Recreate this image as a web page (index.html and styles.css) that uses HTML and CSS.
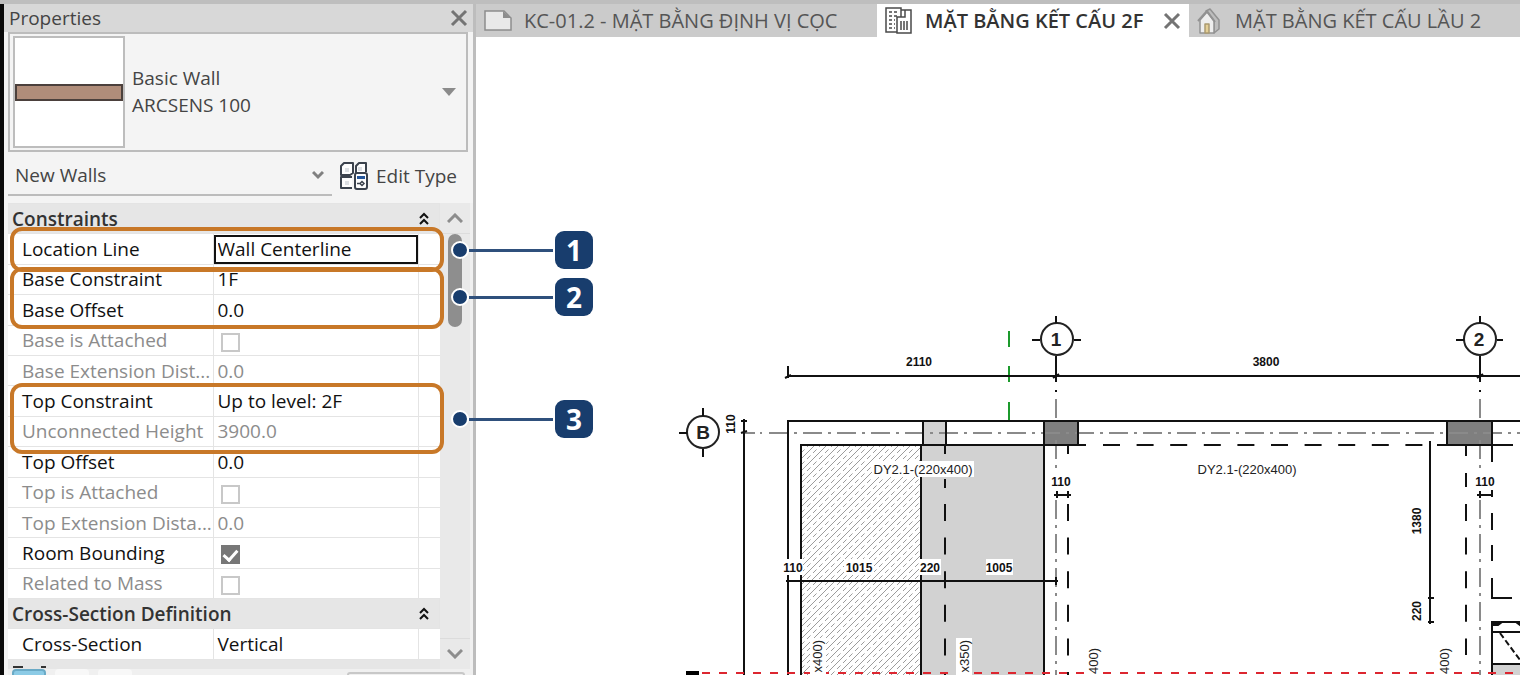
FILE: index.html
```html
<!DOCTYPE html>
<html lang="vi">
<head>
<meta charset="utf-8">
<title>Properties</title>
<link rel="stylesheet" href="styles.css">
</head>
<body>
<div class="app">
  <aside class="panel">
    <header class="panel-title">
      <h1>Properties</h1>
      <button class="close" aria-label="Close properties"><svg width="18" height="18" viewBox="0 0 18 18"><path d="M2 2L16 16M16 2L2 16"/></svg></button>
    </header>
    <button class="type-selector">
      <span class="type-preview"><span class="wall-swatch"></span></span>
      <span class="type-name"><span>Basic Wall</span><span>ARCSENS 100</span></span>
      <svg class="triangle" width="14" height="8" viewBox="0 0 14 8"><path d="M0 0H14L7 8Z"/></svg>
    </button>
    <div class="filter">
      <div class="select-wrap">
        <select aria-label="Element filter"><option>New Walls</option></select>
        <svg class="caret" width="12" height="10" viewBox="0 0 12 10"><path d="M1 2L6 7L11 2"/></svg>
      </div>
      <button class="edit-type">
        <svg width="28" height="28" viewBox="0 0 28 28">
          <g fill="#fdfdfd" stroke="#3b424d" stroke-width="2" stroke-linejoin="round"><path d="M4 1H13V11L10 13H1V4Z"/><path d="M16 12V4L19 1H26V10"/><path d="M12 26H1V15H12"/><rect x="15" y="11" width="12" height="16" rx="2"/></g>
          <path fill="#dcdfe3" d="M5 6H9V10H5ZM18 5H22V9H18ZM5 19H9V23H5Z"/>
          <path fill="#24559a" d="M17 14H25V17H17Z"/>
          <path fill="none" stroke="#3b424d" stroke-width="1.500" d="M17 21.500H20M20 21.500L22 19.500L24 21.500L22 23.500Z"/>
        </svg>
        <span>Edit Type</span>
      </button>
    </div>
    <div class="grid">
      <div class="rows">
        <table>
          <colgroup><col class="c-name"><col><col class="c-more"></colgroup>
          <tbody>
            <tr class="group"><th colspan="3"><div>Constraints <button aria-label="Collapse Constraints"><svg width="10" height="14" viewBox="0 0 10 14"><path d="M1 6L5 2L9 6M1 12L5 8L9 12"/></svg></button></div></th></tr>
            <tr><th><label for="loc">Location Line</label></th><td class="editing"><input id="loc" type="text" value="Wall Centerline"></td><td></td></tr>
            <tr><th>Base Constraint</th><td>1F</td><td></td></tr>
            <tr><th>Base Offset</th><td>0.0</td><td></td></tr>
            <tr class="off"><th><label for="ba">Base is Attached</label></th><td><input id="ba" type="checkbox" disabled></td><td></td></tr>
            <tr class="off"><th>Base Extension Dist...</th><td>0.0</td><td></td></tr>
            <tr><th>Top Constraint</th><td>Up to level: 2F</td><td></td></tr>
            <tr class="off"><th>Unconnected Height</th><td>3900.0</td><td></td></tr>
            <tr><th>Top Offset</th><td>0.0</td><td></td></tr>
            <tr class="off"><th><label for="ta">Top is Attached</label></th><td><input id="ta" type="checkbox" disabled></td><td></td></tr>
            <tr class="off"><th>Top Extension Dista...</th><td>0.0</td><td></td></tr>
            <tr><th><label for="rb">Room Bounding</label></th><td><input id="rb" type="checkbox" checked></td><td></td></tr>
            <tr class="off"><th><label for="rm">Related to Mass</label></th><td><input id="rm" type="checkbox" disabled></td><td></td></tr>
            <tr class="group"><th colspan="3"><div>Cross-Section Definition <button aria-label="Collapse Cross-Section Definition"><svg width="10" height="14" viewBox="0 0 10 14"><path d="M1 6L5 2L9 6M1 12L5 8L9 12"/></svg></button></div></th></tr>
            <tr><th>Cross-Section</th><td>Vertical</td><td></td></tr>
          </tbody>
        </table>
        <svg class="next-group" width="40" height="9" viewBox="0 0 40 9"><path d="M5 7H15M33 7H38"/></svg>
      </div>
      <div class="scrollbar">
        <button aria-label="Scroll up"><svg width="16" height="10" viewBox="0 0 16 10"><path d="M1 9L8 2L15 9"/></svg></button>
        <div class="track"><div class="thumb"></div></div>
        <button aria-label="Scroll down"><svg width="16" height="10" viewBox="0 0 16 10"><path d="M1 1L8 8L15 1"/></svg></button>
      </div>
      <div class="mark mark-1"></div>
      <div class="mark mark-2"></div>
      <div class="mark mark-3"></div>
      <div class="callout callout-1"><i class="dot"></i><i class="lead"></i><b>1</b></div>
      <div class="callout callout-2"><i class="dot"></i><i class="lead"></i><b>2</b></div>
      <div class="callout callout-3"><i class="dot"></i><i class="lead"></i><b>3</b></div>
    </div>
    <footer class="panel-foot"><span class="tile blue"></span><span class="tile"></span><span class="tile"></span><span class="apply"></span></footer>
  </aside>

  <main class="view">
    <nav class="tabs">
      <button class="tab tab-sheet">
        <svg width="28" height="22" viewBox="0 0 28 22"><path fill="#e9e9e9" stroke="#8d8d8d" stroke-width="1.500" d="M1 1H20L27 8V20H1Z"/><path fill="#8d8d8d" d="M19 1L27 8H19Z"/></svg>
        <span>KC-01.2 - MẶT BẰNG ĐỊNH VỊ CỌC</span>
      </button>
      <div class="tab active">
        <svg width="28" height="28" viewBox="0 0 28 28" fill="none" stroke="#4a4a4a" stroke-width="1.500"><path d="M12 25H1V1H16V10M16 3H26V26H12V10H20V3"/><path stroke-dasharray="3 2" d="M4 5H13M4 9H13M4 13H10M4 17H10M4 21H10"/><path d="M16 14V23M19 14V23M22 14V23"/></svg>
        <span>MẶT BẰNG KẾT CẤU 2F</span>
        <button class="close" aria-label="Close view"><svg width="18" height="18" viewBox="0 0 18 18"><path d="M2 2L16 16M16 2L2 16"/></svg></button>
      </div>
      <button class="tab tab-plan">
        <svg width="26" height="26" viewBox="0 0 26 26" stroke="#929292" stroke-width="1.500" stroke-linejoin="round"><path fill="#bdbdbd" d="M9 3L13 1L22 12V21L17 25V13Z"/><path fill="#eee" d="M3 12L10 4L17 13V25H3Z"/><path fill="none" stroke-width="2" d="M1 13L10 3L18 14"/><path fill="#e4cf96" stroke="#aa9a70" d="M8 16H12V25H8Z"/></svg>
        <span>MẶT BẰNG KẾT CẤU LẦU 2</span>
      </button>
    </nav>
    <svg class="drawing" viewBox="476 37 1044 638" preserveAspectRatio="xMinYMin slice" role="img" aria-label="Structural plan">
      <defs>
        <pattern id="hatch" width="12" height="12" patternUnits="userSpaceOnUse">
          <path class="hatch" d="M-3 3L3 -3M-3 15L15 -3M9 15L15 9"/>
          <path class="hatch" stroke-dasharray="5 3.500" d="M-3 9L9 -3M3 15L15 3"/>
        </pattern>
      </defs>
      <rect x="802" y="445" width="119" height="230" fill="url(#hatch)"/>
      <rect x="922" y="445" width="122" height="230" fill="#d2d2d2"/>
      <rect x="923" y="422" width="23" height="22" fill="#d2d2d2"/>
      <rect x="1045" y="422" width="33" height="23" fill="#7f7f7f"/>
      <rect x="1447" y="422" width="45" height="23" fill="#7f7f7f"/>
      <rect x="1493" y="665" width="27" height="10" fill="#d2d2d2"/>
      <g class="axis">
        <path class="solid" d="M745 433H755M760 433H762M1056 399V418M1480 399V418"/>
        <path d="M769 433H1520M1056 500V675M1480 500V675"/>
        <path d="M1056 440V474M1480 440V474"/>
      </g>
      <path class="green" d="M1009 331V347M1009 366V382M1009 402V420"/>
      <g class="ink">
        <path d="M788 376H1520M788 366V378M785 378L791 375M1053 378L1059 374M1477 378L1483 374"/>
        <path d="M1056 364V382M1056 390V392M1480 364V382M1480 390V392"/>
        <path d="M788 675V421H1520M801 675V445H1086M921 445V675M1044 421V675M1078 421V445M923 421V445M946 421V445"/>
        <path d="M1437 445H1513M1447 421V445M1492 421V462"/>
        <path stroke-dasharray="17 16.600" d="M1103 445H1434M945 504V675M1068 504V675M1466 504V655"/>
        <path d="M945 445V454M945 479V488M1068 445V454M1466 445V456M1466 473V487M1492 490V497M1492 513V530M1492 545V561M1492 578V598H1512"/>
        <path d="M744 419V675M741 421H747M741 433L747 431"/>
        <path d="M786 581H1058M788 577V585M1056 577V585"/>
        <path d="M1054 495H1071M1057 491V498M1068 491V498M1477 495H1493M1480 491V498"/>
        <path d="M1430 441V624M1428 598H1434M1428 622H1434"/>
        <path d="M1492 675V622H1520M1492 632H1520M1492 664H1520"/>
        <path stroke-dasharray="6 3" d="M1500 633L1520 660"/>
        <path fill="#111" d="M1493 622H1502L1498 625H1493ZM1516 622H1520V625Z"/>
        <g class="bubble"><circle cx="1057" cy="339" r="16"/><circle cx="1480" cy="339" r="16"/><circle cx="703" cy="432" r="16"/></g>
        <path d="M1056 316V323M1056 356V364M1480 356V364M1032 340H1040M1074 340H1081M1480 316V323M1456 340H1464M1497 340H1503M703 408V416M703 449V457M679 433H687"/>
      </g>
      <path class="red" d="M702 673H1085M1103 673H1434M1454 673H1520"/>
      <rect x="686" y="671" width="13" height="4" fill="#000"/>
      <g class="label-bg">
        <rect x="872" y="461" width="102" height="16"/><rect x="784" y="559" width="19" height="16"/><rect x="844" y="559" width="30" height="16"/><rect x="919" y="559" width="22" height="16"/><rect x="986" y="559" width="27" height="16"/><rect x="810" y="638" width="16" height="37"/><rect x="956" y="638" width="16" height="37"/><rect x="722" y="413" width="16" height="22"/>
      </g>
      <g class="bubble-text"><text x="1056" y="346">1</text><text x="1479" y="346">2</text><text x="703" y="439">B</text></g>
      <g class="dim">
        <text x="919" y="366">2110</text><text x="1266" y="366">3800</text><text x="793" y="572">110</text><text x="859" y="572">1015</text><text x="930" y="572">220</text><text x="999" y="572">1005</text><text x="1061" y="486">110</text><text x="1485" y="486">110</text>
        <text transform="translate(735 424) rotate(-90)">110</text><text transform="translate(1421 521) rotate(-90)">1380</text><text transform="translate(1421 611) rotate(-90)">220</text>
      </g>
      <g class="beam">
        <text x="923" y="474">DY2.1-(220x400)</text><text x="1247" y="474">DY2.1-(220x400)</text>
      </g>
      <g class="beam beam-side">
        <text transform="translate(822 640) rotate(-90)">x400)</text><text transform="translate(969 640) rotate(-90)">x350)</text><text transform="translate(1098 648) rotate(-90)">400)</text><text transform="translate(1449 648) rotate(-90)">400)</text>
      </g>
    </svg>
  </main>
</div>
</body>
</html>
```
FILE: styles.css
```css
* { box-sizing: border-box; }
body {
  margin: 0;
  font-family: "Open Sans", "Noto Sans", sans-serif;
  font-size: 19px;
  line-height: 26px;
  color: #444;
  background: #fff;
}
button, select, input { font: inherit; color: inherit; margin: 0; padding: 0; border: 0; border-radius: 0; background: none; }
button { display: flex; align-items: center; }
svg { flex: none; }

.app { display: flex; height: 100vh; overflow: hidden; border-top: 4px solid #bebebe; }

.panel {
  position: relative;
  z-index: 1;
  display: flex;
  flex-direction: column;
  flex: 0 0 476px;
  border-left: 4px solid #0a0a0a;
  border-right: 3px solid #bdbdbd;
  padding-left: 4px;
  background: #f4f4f4;
}
.panel-title { display: flex; align-items: center; justify-content: space-between; height: 28px; margin-left: -4px; padding: 0 5px; background: #d8d8d8; flex: none; }
.panel-title h1 { margin: 0; font-size: 19px; font-weight: 400; }
.close path { fill: none; stroke: #747474; stroke-width: 3; }

.type-selector { flex: none; height: 120px; margin-right: 5px; padding: 2px 3px; border: 2px solid #bcbcbc; text-align: left; gap: 7px; }
.type-preview { display: flex; align-items: center; width: 112px; height: 112px; border: 2px solid #bdbdbd; background: #fff; }
.wall-swatch { flex: 1; height: 17px; border: 2px solid #4b403c; background: #b08d7a; }
.type-name { display: flex; flex-direction: column; flex: 1; line-height: 27px; }
.triangle { margin-right: 7px; fill: #8b8b8b; }

.filter { display: flex; flex: none; height: 51px; padding-bottom: 7px; gap: 8px; }
.select-wrap { display: flex; align-items: center; flex: 0 0 324px; padding-top: 4px; border-bottom: 2px solid #bcbcbc; }
.select-wrap select { appearance: none; flex: 1; padding: 0 7px; }
.caret { margin: 0 8px 0 -20px; pointer-events: none; }
.caret path { fill: none; stroke: #808080; stroke-width: 3; }
.edit-type { gap: 8px; padding-top: 3px; }

.grid { position: relative; display: flex; flex: 1; min-height: 0; border-right: 3px solid #f0f0f0; }
.rows { flex: 1; min-width: 0; overflow: hidden; background: #e6e6e6; }
table { width: 100%; height: 457px; table-layout: fixed; border-collapse: collapse; color: #111; }
.c-name { width: 205px; }
.c-more { width: 21px; }
th, td { height: 30px; padding: 0 0 0 4px; border: 1px solid #e4e4e4; background: #fff; line-height: 22px; font-weight: 400; text-align: left; white-space: nowrap; }
th { padding-left: 14px; border-left: 0; }
td:last-child { border-right: 0; }
.off { color: #8c8c8c; }
.group th { padding: 0 10px 0 4px; background: #e6e6e6; font-weight: 600; color: #333; }
.group th div { display: flex; align-items: center; justify-content: space-between; }
.group path { fill: none; stroke: #111; stroke-width: 2; }
.editing { padding: 0; }
.editing input { display: block; width: 100%; height: 29px; padding: 0 2px; border: 2px solid #111; background: #fff; }
input[type="checkbox"] { appearance: none; display: grid; place-items: center; width: 19px; height: 19px; margin: 4px 0 0 3px; border: 2px solid #c8c8c8; background: #fff; }
input[type="checkbox"]:checked { border-color: #777; background: #777; }
input[type="checkbox"]:checked::before { content: ""; width: 6px; height: 11px; margin-bottom: 3px; border: solid #fff; border-width: 0 3px 3px 0; transform: rotate(42deg); }
.next-group { display: block; }
.next-group path { fill: none; stroke: #333; stroke-width: 2; }

.scrollbar { display: flex; flex-direction: column; align-items: center; width: 30px; background: #e9e9e9; }
.scrollbar button { justify-content: center; width: 100%; height: 30px; }
.scrollbar path { fill: none; stroke: #8d8d8d; stroke-width: 3; }
.track { flex: 1; width: 100%; border: solid #dcdcdc; border-width: 1px 0; }
.thumb { width: 14px; height: 93px; margin: 0 auto; border-radius: 7px; background: #8e8e8e; }

.mark { position: absolute; left: 2px; width: 434px; border: 4px solid #c87828; border-radius: 12px; }
.mark-1 { top: 24px; height: 45px; }
.mark-2 { top: 64px; height: 62px; }
.mark-3 { top: 180px; height: 71px; }
.callout { position: absolute; left: 443px; display: flex; align-items: center; }
.callout-1 { top: 28px; }
.callout-2 { top: 75px; }
.callout-3 { top: 197px; }
.dot { width: 18px; height: 18px; border: 2px solid #fff; border-radius: 50%; background: #183d6d; }
.lead { width: 84px; height: 3px; margin-right: 2px; background: #2f507c; }
.callout b { width: 38px; height: 38px; border-radius: 9px; background: #183d6d; color: #fff; font-family: "Noto Sans", sans-serif; font-size: 28px; line-height: 38px; text-align: center; }

.panel-foot { display: flex; flex: none; height: 6px; padding: 0 8px 0 4px; gap: 9px; overflow: hidden; background: #f0f0f0; }
.tile { width: 34px; height: 34px; border-radius: 4px; background: #f8f8f8; }
.tile.blue { border: 2px solid #6aaac6; background: #8ccbe6; }
.apply { width: 118px; height: 34px; margin: 3px 0 0 auto; border: 2px solid #c8c8c8; border-radius: 3px; }

.view { display: flex; flex-direction: column; flex: 1; min-width: 0; }
.tabs { display: flex; flex: none; height: 33px; overflow: hidden; background: #cbcbcb; color: #555; white-space: nowrap; }
.tab { display: flex; align-items: center; flex: none; padding: 0 8px; gap: 12px; font-size: 20px; }
.tab-sheet { width: 401px; }
.tab.active { width: 312px; background: #fff; color: #333; font-weight: 600; }
.tab .close { margin-left: auto; }

.drawing { flex: 1; min-height: 0; width: 100%; font-family: "Liberation Sans", sans-serif; }
.ink path { stroke: #111; stroke-width: 2; }
.ink path:not([fill]) { fill: none; }
.bubble circle { fill: #fff; stroke: #222; stroke-width: 2; }
.axis path { fill: none; stroke: #8a8a8a; stroke-width: 2; stroke-dasharray: 19 6 3 6; }
.axis .solid { stroke-dasharray: none; }
.green { fill: none; stroke: #1c9a2c; stroke-width: 2; }
.red { fill: none; stroke: #dc2630; stroke-width: 2; stroke-dasharray: 8 9; }
.hatch { fill: none; stroke: #9c9c9c; stroke-width: 1; }
.label-bg rect { fill: #fff; }
.bubble-text { font-size: 19px; font-weight: 700; fill: #222; text-anchor: middle; }
.dim { font-size: 12px; font-weight: 700; fill: #111; text-anchor: middle; }
.beam { font-size: 13px; fill: #222; text-anchor: middle; }
.beam-side { text-anchor: end; }
```
